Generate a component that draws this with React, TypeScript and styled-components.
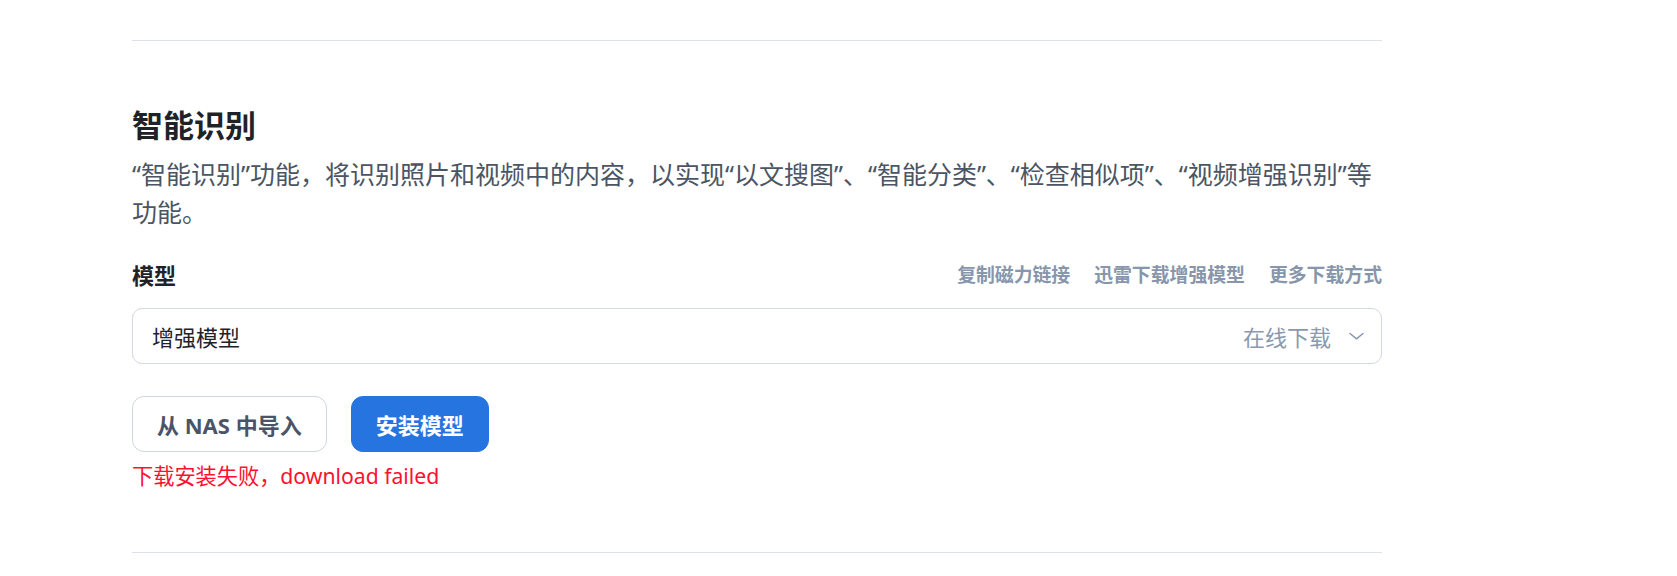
import React from "react";
import styled, { createGlobalStyle } from "styled-components";

const GlobalStyle = createGlobalStyle`
  html, body {
    margin: 0;
    padding: 0;
    background: #ffffff;
  }
  body {
    font-family: "Noto Sans", "Noto Sans CJK SC", sans-serif;
    -webkit-font-smoothing: antialiased;
  }
  * {
    box-sizing: border-box;
  }
`;

const links = ["复制磁力链接", "迅雷下载增强模型", "更多下载方式"];

const ChevronIcon = () => (
  <svg width="15" height="8" viewBox="0 0 15 8" fill="none">
    <polyline
      points="1 1.5 7.5 6.8 14 1.5"
      stroke="#8a99ae"
      strokeWidth="1.5"
      strokeLinecap="round"
      strokeLinejoin="round"
    />
  </svg>
);

export default function App() {
  return (
    <Page>
      <GlobalStyle />
      <Divider />
      <Section>
        <Title>智能识别</Title>
        <Description>
          “智能识别”功能，将识别照片和视频中的内容，以实现“以文搜图”、“智能分类”、“检查相似项”、“视频增强识别”等功能。
        </Description>

        <FieldHeader>
          <FieldLabel>模型</FieldLabel>
          <LinkGroup>
            {links.map((text) => (
              <TextLink key={text}>{text}</TextLink>
            ))}
          </LinkGroup>
        </FieldHeader>

        <Select>
          <SelectValue>增强模型</SelectValue>
          <SelectMeta>
            <span>在线下载</span>
            <ChevronIcon />
          </SelectMeta>
        </Select>

        <ButtonRow>
          <Button>从 NAS 中导入</Button>
          <Button variant="primary">安装模型</Button>
        </ButtonRow>

        <ErrorText>下载安装失败，download failed</ErrorText>
      </Section>
      <Divider />
    </Page>
  );
}

const Page = styled.div`
  width: 1250px;
  margin-left: 132px;
  padding-top: 40px;
`;

const Divider = styled.div`
  height: 1px;
  background: #dbe1e8;
`;

const Section = styled.section`
  padding-top: 62px;
  padding-bottom: 61px;
`;

const Title = styled.h2`
  margin: 0;
  font-family: "Noto Sans", "Noto Sans CJK SC", sans-serif;
  font-size: 31px;
  line-height: 44px;
  font-weight: 700;
  color: #1f2328;
`;

const Description = styled.p`
  margin: 9px 0 0;
  font-size: 25px;
  line-height: 37.5px;
  color: #4b5563;
`;

const FieldHeader = styled.div`
  display: flex;
  align-items: center;
  justify-content: space-between;
  margin-top: 29px;
  height: 30px;
`;

const FieldLabel = styled.label`
  font-size: 22px;
  line-height: 30px;
  font-weight: 700;
  color: #1f2328;
`;

const LinkGroup = styled.div`
  display: flex;
  align-items: center;
  gap: 24px;
`;

const TextLink = styled.a`
  font-size: 18.85px;
  line-height: 28px;
  font-weight: 700;
  color: #8796ab;
  cursor: pointer;
  text-decoration: none;

  &:hover {
    color: #2574e0;
  }
`;

const Select = styled.div`
  display: flex;
  align-items: center;
  justify-content: space-between;
  margin-top: 18px;
  height: 56px;
  padding: 0 17px 0 19px;
  border: 1px solid #cfd8e3;
  border-radius: 10px;
  background: #fff;
  cursor: pointer;
`;

const SelectValue = styled.span`
  font-size: 22px;
  color: #1f2328;
`;

const SelectMeta = styled.span`
  display: flex;
  align-items: center;
  gap: 18px;
  font-size: 22px;
  color: #8a99ae;
`;

const ButtonRow = styled.div`
  display: flex;
  gap: 24px;
  margin-top: 32px;
`;

const Button = styled.button<{ variant?: "primary" | "default" }>`
  height: 56px;
  padding: 0 24px;
  border-radius: 12px;
  border: 1px solid
    ${(props) => (props.variant === "primary" ? "#2574e0" : "#cdd6e1")};
  background: ${(props) => (props.variant === "primary" ? "#2574e0" : "#fff")};
  color: ${(props) => (props.variant === "primary" ? "#fff" : "#4a5466")};
  font-family: "Noto Sans", "Noto Sans CJK SC", sans-serif;
  font-size: 22px;
  font-weight: 700;
  cursor: pointer;
`;

const ErrorText = styled.div`
  margin-top: 9px;
  font-size: 21.2px;
  line-height: 30px;
  color: #ff1030;
`;
